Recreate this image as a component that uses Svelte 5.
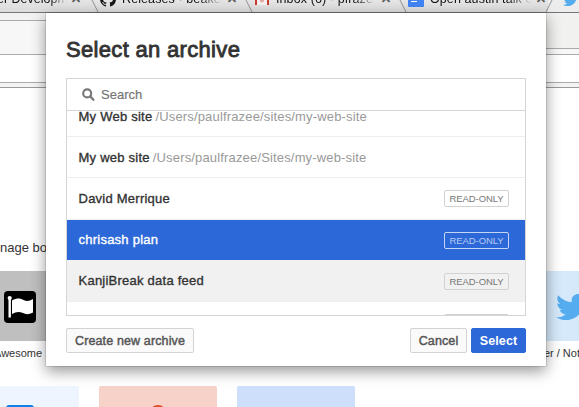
<script>
  const rows = [
    { name: 'My Web site', path: '/Users/paulfrazee/sites/my-web-site', height: 41 },
    { name: 'My web site', path: '/Users/paulfrazee/Sites/my-web-site', height: 41 },
    { name: 'David Merrique', readOnly: true, height: 42 },
    { name: 'chrisash plan', readOnly: true, selected: true, height: 40 },
    { name: 'KanjiBreak data feed', readOnly: true, shaded: true, height: 42 },
    { name: '', readOnly: true, height: 41 }
  ];
</script>

<div class="screen">
  <div class="browser">
    <div class="tabs">
      <div class="tab first"><span class="title t1">er Developm</span><span class="close">×</span></div>
      <div class="tab second">
        <svg class="fav" width="16" height="16" viewBox="0 0 16 16"><path fill="#171515" d="M8 0C3.580 0 0 3.580 0 8c0 3.540 2.290 6.530 5.470 7.590.4.070.55-.17.55-.38v-1.490c-2.010.37-2.530-.49-2.690-.94-.09-.23-.48-.94-.82-1.130-.28-.15-.68-.52-.01-.53.630-.01 1.080.58 1.230.82.720 1.210 1.870.87 2.330.66.070-.52.280-.87.510-1.070-1.780-.2-3.640-.89-3.640-3.950 0-.87.310-1.590.820-2.150-.08-.2-.36-1.020.080-2.120 0 0 .67-.21 2.200.82a7.600 7.600 0 0 1 4 0c1.530-1.040 2.200-.82 2.200-.82.440 1.100.160 1.920.080 2.120.510.56.820 1.270.820 2.150 0 3.070-1.870 3.750-3.650 3.950.290.25.540.73.540 1.480v2.200c0 .21.150.46.550.38A8 8 0 0 0 16 8c0-4.420-3.580-8-8-8z"/></svg>
        <span class="title t2">Releases · beaker</span><span class="close">×</span>
      </div>
      <div class="tab third">
        <svg class="gmail" width="14" height="12" viewBox="0 0 14 12"><path fill="#f5f1f0" d="M0 0h14v12H0z"/><circle cx="7" cy="7.500" r="2" fill="#dfa9a2"/><path fill="#c83c30" d="M0 0h2v12H0zM12 0h2v12h-2zM0 0h2l5 4 5-4h2v2L7 6.500 0 2z"/></svg>
        <span class="title t3">Inbox (6) - pfraze</span><span class="close">×</span>
      </div>
      <div class="tab fourth">
        <svg class="docs" width="16" height="16" viewBox="0 0 16 16"><rect width="16" height="16" rx="1" fill="#4284f4"/><path d="M3 4.500h10M3 7.500h10M3 10.500h6" stroke="#fff" stroke-width="1"/></svg>
        <span class="title t4">Open austin talk c</span><span class="close">×</span>
      </div>
      <div class="tab fifth">
        <svg class="bird" width="15" height="12.200" viewBox="0 0 24 19.500"><path fill="#55acee" d="M24 2.300c-.9.400-1.800.7-2.800.8 1-.6 1.800-1.600 2.200-2.700-1 .6-2 1-3.100 1.200A4.900 4.900 0 0 0 11.900 6C7.800 5.900 4.200 3.900 1.700.9.300 3.200 1 6.100 3.200 7.500c-.8 0-1.600-.2-2.200-.6-.1 2.300 1.600 4.400 3.900 4.900-.7.2-1.500.2-2.200.1.600 2 2.400 3.400 4.600 3.400A9.900 9.900 0 0 1 0 17.300a14 14 0 0 0 21.500-12.400c1-.7 1.800-1.600 2.500-2.600z"/></svg>
      </div>
      <svg class="edges" width="579" height="13" viewBox="0 0 579 13"><path d="M92 0l6 12M246 0l6 12M400 0l6 12M552 0l-6 12" fill="none" stroke="#919191"/></svg>
    </div>
    <div class="chrome">
      <div class="side left"><div class="gap"></div><div class="bar"></div><div class="field"></div><div class="base"></div></div>
      <div class="side right"><div class="gap"></div><div class="bar"></div><div class="field"></div><div class="base"></div></div>
    </div>
    <div class="page">
      <div class="intro"><span>nage bo</span></div>
      <div class="tiles">
        <div class="tile gray">
          <svg width="32" height="32" viewBox="0 0 32 32"><rect width="32" height="32" rx="4" fill="#000"/><circle cx="5.700" cy="7" r="2.100" fill="#fff"/><path d="M4.500 7h2.400v19.500H4.500zM8 9.500c5-2.600 8-2.600 12-.3 3 1.500 5.800.7 9-1.200v13.500c-4 2-7 2.200-10 .6-4-2-7-1.300-11 1z" fill="#fff"/></svg>
        </div>
        <div class="tile sky">
          <svg width="32" height="26" viewBox="0 0 24 19.500"><path fill="#55acee" d="M24 2.300c-.9.400-1.800.7-2.800.8 1-.6 1.800-1.600 2.200-2.700-1 .6-2 1-3.100 1.200A4.900 4.900 0 0 0 11.900 6C7.800 5.900 4.200 3.900 1.700.9.300 3.200 1 6.100 3.200 7.500c-.8 0-1.600-.2-2.200-.6-.1 2.300 1.600 4.400 3.900 4.900-.7.2-1.500.2-2.200.1.600 2 2.400 3.400 4.600 3.400A9.900 9.900 0 0 1 0 17.300a14 14 0 0 0 21.500-12.400c1-.7 1.800-1.600 2.500-2.600z"/></svg>
        </div>
      </div>
      <div class="labels"><span class="l1">Awesome</span><span class="l2">er / Not</span></div>
      <div class="tiles lower">
        <div class="tile ice"><svg width="28" height="3" viewBox="0 0 28 3"><rect width="28" height="8" rx="3" fill="#1081e6"/></svg></div>
        <div class="tile rose"><svg width="14" height="3" viewBox="0 0 14 3"><ellipse cx="7" cy="7" rx="8" ry="7" fill="#e05028"/></svg></div>
        <div class="tile blue"></div>
      </div>
    </div>
  </div>

  <div class="dialog">
    <h1><span>Select an archive</span></h1>
    <div class="picker">
      <div class="search">
        <svg width="13" height="13" viewBox="0 0 13 13"><circle cx="5.200" cy="5.400" r="4" fill="none" stroke="#777" stroke-width="2.100"/><path d="M8.200 8.400l3.200 3.300" stroke="#777" stroke-width="2.300" stroke-linecap="round"/></svg>
        <span>Search</span>
      </div>
      <div class="list">
        <div class="scrolled">
          {#each rows as row}
            <div class="row" class:selected={row.selected} class:shaded={row.shaded} style="height: {row.height}px">
              <span class="name">{row.name}</span>
              {#if row.path}<span class="path">{row.path}</span>{/if}
              {#if row.readOnly}<span class="badge">{row.name ? 'READ-ONLY' : ''}</span>{/if}
            </div>
          {/each}
        </div>
      </div>
    </div>
    <div class="actions">
      <button class="create">Create new archive</button>
      <button class="cancel">Cancel</button>
      <button class="primary">Select</button>
    </div>
  </div>
</div>

<style>
  :global(body) { margin: 0; overflow: hidden; }
  .screen { position: relative; width: 579px; height: 407px; overflow: hidden; background: #fff; color: #333; font-family: "Liberation Sans", Arial, sans-serif; }
  .screen * { box-sizing: border-box; }
  .browser { display: flex; flex-direction: column; height: 407px; }
  svg { display: block; flex: none; }

  .tabs { position: relative; display: flex; height: 13px; flex: none; background: linear-gradient(#e5e5e5, #dcdcdc); border-bottom: 1px solid #777; overflow: hidden; }
  .tab { display: flex; align-items: flex-start; flex: none; height: 12px; color: #111; font-size: 12.500px; line-height: 16px; white-space: nowrap; }
  .first { width: 98px; } .second { width: 154px; padding-left: 2px; } .third { width: 154px; padding-left: 3px; } .fourth { width: 142px; padding-left: 2px; }
  .fifth { width: 31px; padding-left: 14px; background: #ededed; }
  .title { margin-top: -9px; overflow: hidden; height: 20px; -webkit-mask-image: linear-gradient(90deg, #000 76%, transparent); mask-image: linear-gradient(90deg, #000 76%, transparent); }
  .t1 { width: 70px; margin-left: -3px; } .t2 { width: 101px; margin-left: 6px; letter-spacing: .1px; } .t3 { width: 101px; margin-left: 7px; letter-spacing: .1px; } .t4 { width: 102px; margin-left: 6px; letter-spacing: .1px; }
  .close { color: #555; font-size: 17px; margin: -9px 0 0 4px; -webkit-text-stroke: .4px #555; }
  .fav { margin-top: -9px; } .gmail { margin-top: -7px; } .docs { margin-top: -9px; } .bird { margin-top: -6px; margin-left: 1px; }
  .edges { position: absolute; left: 0; top: 0; }

  .chrome { display: flex; height: 75px; flex: none; background: #f4f4f4; }
  .side { flex: 1; display: flex; flex-direction: column; }
  .gap { height: 8px; border-bottom: 1px solid #aaa; background: #f2f2f2; }
  .bar { height: 34px; border-bottom: 1px solid #aaa; background: #f7f7f7; }
  .right .gap { height: 36px; background: #f1f1ef; }
  .right .bar { height: 6px; }
  .field { height: 28px; background: #fff; border-bottom: 1px solid #aaa; }
  .base { height: 5px; border-bottom: 1px solid #999; }

  .page { flex: 1; display: flex; flex-direction: column; }
  .intro { height: 183px; padding-top: 152px; font-size: 13px; line-height: 16px; white-space: nowrap; }
  .tiles { display: flex; justify-content: space-between; height: 70px; flex: none; }
  .tile { height: 70px; flex: none; display: flex; align-items: center; padding-top: 2px; }
  .gray { width: 79px; background: #bfbfbf; padding-left: 4px; }
  .sky { width: 66px; background: #d5e9fa; padding-left: 43px; overflow: hidden; }
  .labels { display: flex; justify-content: space-between; height: 45px; padding-top: 5px; font-size: 11px; line-height: 14px; flex: none; }
  .l1 { margin-left: -6px; } .l2 { margin-right: -1px; }
  .lower { justify-content: flex-start; gap: 20px; height: 21px; overflow: hidden; }
  .lower .tile { width: 118px; border-radius: 2px; align-items: flex-start; padding-top: 19px; }
  .lower .ice { width: 79px; background: #eff5fe; padding-left: 6px; }
  .lower .rose { background: #f6d2c8; padding-left: 52px; }
  .blue { background: #cedffb; }

  .dialog { position: absolute; left: 46px; top: 13px; width: 500px; height: 353px; padding: 0 20px; background: #fff; box-shadow: 0 0 1px rgba(0,0,0,.65), 0 5px 14px rgba(0,0,0,.42); display: flex; flex-direction: column; }
  h1 { height: 65px; margin: 0; padding-top: 24px; font-size: 22px; line-height: 26px; font-weight: 400; letter-spacing: .32px; -webkit-text-stroke: .85px #333; }
  .picker { width: 460px; height: 238px; border: 1px solid #d5d5d5; display: flex; flex-direction: column; }
  .search { height: 32px; flex: none; display: flex; align-items: center; gap: 6px; padding-left: 15px; border-bottom: 1px solid #d5d5d5; color: #777; font-size: 13px; -webkit-text-stroke: .2px #777; }
  .list { flex: 1; overflow: hidden; }
  .scrolled { margin-top: -15px; }
  .row { display: flex; align-items: center; padding: 0 16px 0 11.500px; border-bottom: 1px solid #eee; font-size: 13px; white-space: nowrap; }
  .name { -webkit-text-stroke: .35px currentColor; letter-spacing: .24px; }
  .path { color: #999; margin-left: 3px; letter-spacing: .16px; }
  .badge { margin-left: auto; width: 65px; height: 17px; border: 1px solid #d2d2d2; border-radius: 2px; color: #777; font-size: 9.500px; line-height: 15px; text-align: center; letter-spacing: -.1px; }
  .selected { background: #2d68d8; color: #fff; border-color: #2d68d8; }
  .selected .badge, .shaded .badge { position: relative; top: .5px; }
  .selected .badge { color: #b5caf1; border-color: #c5d5f4; }
  .shaded { background: #f1f1f1; }
  .actions { display: flex; padding-top: 12px; }
  button { height: 25px; padding: 0; border: 1px solid #d3d3d3; border-radius: 2px; background: #fafafa; color: #555; font: 400 12.500px "Liberation Sans", Arial, sans-serif; letter-spacing: .13px; -webkit-text-stroke: .45px currentColor; white-space: nowrap; }
  .create { width: 128px; margin-right: auto; }
  .cancel { width: 57px; margin-right: 4px; }
  .primary { width: 55px; background: #2d68d8; border-color: #2d68d8; color: #fff; font-weight: 700; -webkit-text-stroke: 0; }
</style>
